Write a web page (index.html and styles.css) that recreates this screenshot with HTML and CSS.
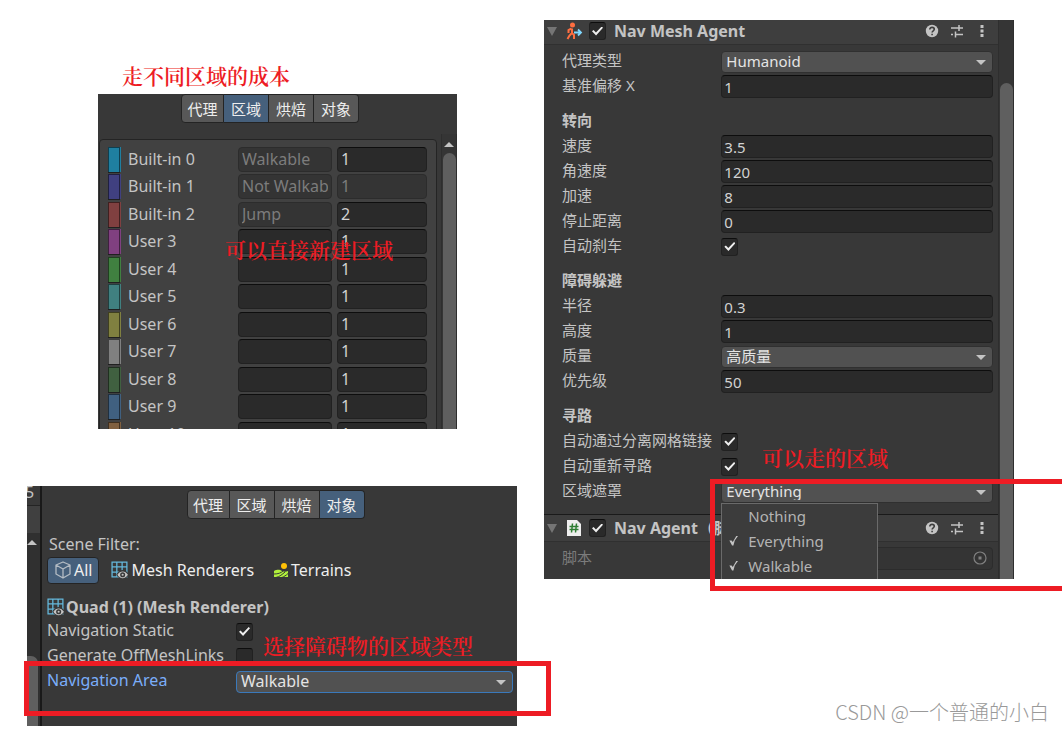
FILE: index.html
```
<!DOCTYPE html>
<html lang="zh-CN">
<head>
    <meta charset="UTF-8">
    <meta name="viewport" content="width=device-width, initial-scale=1.0">
    <title>导航网格设置</title>
    <link rel="stylesheet" href="styles.css">
</head>
<body>

    <!-- Общие иконки -->
    <svg class="sprite" aria-hidden="true">
        <symbol id="i-mesh" viewBox="0 0 17 17">
            <path d="M1 1h14v14H1zM1 5.500h14M1 10.500h14M5.500 1v14M10.500 1v14" fill="none" stroke="#64b8dc" stroke-width="1.200"/>
            <path d="M5 13c1.500-3 3.500-4.500 6-4.500s4.500 1.500 6 4.500c-1.500 2.500-3.500 4-6 4s-4.500-1.500-6-4z" fill="#383838"/>
            <path d="M6 13c1.300-2.200 3-3.200 5-3.200s3.700 1 5 3.200c-1.300 2.100-3 3.200-5 3.200S7.300 15.100 6 13z" fill="#c4c4c4"/>
            <circle cx="11" cy="13" r="2.400" fill="#383838"/>
            <circle cx="11" cy="13" r="1" fill="#c4c4c4"/>
        </symbol>
        <symbol id="i-help" viewBox="0 0 14 14">
            <circle cx="7" cy="7" r="6.200" fill="#c4c4c4"/>
            <path d="M4.800 5.500c0-3 4.500-2.700 4.500-.2 0 1.500-2.200 1.500-2.200 3.200M7.100 9.700v1.600" fill="none" stroke="#3e3e3e" stroke-width="1.600"/>
        </symbol>
        <symbol id="i-preset" viewBox="0 0 14 14">
            <path d="M1 4h8M9 1v6M9 4h4M1 10.500h2M5.500 7.500v6M5.500 10.500h7.500" fill="none" stroke="#c4c4c4" stroke-width="1.500"/>
        </symbol>
        <symbol id="i-more" viewBox="0 0 14 14">
            <path d="M5.500 1h3v3h-3zM5.500 5.500h3v3h-3zM5.500 10h3v3h-3z" fill="#c4c4c4"/>
        </symbol>
    </svg>

    <main>
        <div class="column">
            <!-- Стоимость областей -->
            <section class="shot shot-areas">
                <p class="note note-title">走不同区域的成本</p>
                <div class="panel areas">
                    <nav class="tabs">
                        <button type="button">代理</button>
                        <button type="button" class="active">区域</button>
                        <button type="button">烘焙</button>
                        <button type="button">对象</button>
                    </nav>
                    <div class="scroll">
                        <ul class="area-list">
                            <li><i class="swatch c0"></i><label for="a0">Built-in 0</label><input id="a0" value="Walkable" disabled><input class="cost" aria-label="Cost 0" value="1"></li>
                            <li><i class="swatch c1"></i><label for="a1">Built-in 1</label><input id="a1" value="Not Walkable" disabled><input class="cost" aria-label="Cost 1" value="1" disabled></li>
                            <li><i class="swatch c2"></i><label for="a2">Built-in 2</label><input id="a2" value="Jump" disabled><input class="cost" aria-label="Cost 2" value="2"></li>
                            <li><i class="swatch c3"></i><label for="a3">User 3</label><input id="a3"><input class="cost" aria-label="Cost 3" value="1"></li>
                            <li><i class="swatch c4"></i><label for="a4">User 4</label><input id="a4"><input class="cost" aria-label="Cost 4" value="1"></li>
                            <li><i class="swatch c5"></i><label for="a5">User 5</label><input id="a5"><input class="cost" aria-label="Cost 5" value="1"></li>
                            <li><i class="swatch c6"></i><label for="a6">User 6</label><input id="a6"><input class="cost" aria-label="Cost 6" value="1"></li>
                            <li><i class="swatch c7"></i><label for="a7">User 7</label><input id="a7"><input class="cost" aria-label="Cost 7" value="1"></li>
                            <li><i class="swatch c8"></i><label for="a8">User 8</label><input id="a8"><input class="cost" aria-label="Cost 8" value="1"></li>
                            <li><i class="swatch c9"></i><label for="a9">User 9</label><input id="a9"><input class="cost" aria-label="Cost 9" value="1"></li>
                            <li><i class="swatch c10"></i><label for="a10">User 10</label><input id="a10"><input class="cost" aria-label="Cost 10" value="1"></li>
                        </ul>
                        <div class="bar"><span class="up"></span><span class="thumb"></span></div>
                    </div>
                </div>
                <p class="note note-new">可以直接新建区域</p>
            </section>

            <!-- Область препятствия -->
            <section class="shot">
                <div class="panel objects">
                    <div class="side">
                        <span class="side-num">5</span>
                        <span class="side-head"></span>
                        <div class="side-bar"><span class="up"></span><span class="thumb"></span></div>
                    </div>
                    <div class="objects-body">
                        <nav class="tabs">
                            <button type="button">代理</button>
                            <button type="button">区域</button>
                            <button type="button">烘焙</button>
                            <button type="button" class="active">对象</button>
                        </nav>
                        <p class="filter-title">Scene Filter:</p>
                        <div class="filters">
                            <button type="button" class="active">
                                <svg width="18" height="18" viewBox="0 0 18 18"><path d="M9 1l7 3v9l-7 4-7-4V4zM2 4l7 4 7-4M9 8v9" fill="none" stroke="#b4bcc4" stroke-width="1.300" stroke-linejoin="round"/></svg>All
                            </button>
                            <button type="button"><svg width="18" height="18"><use href="#i-mesh"/></svg>Mesh Renderers</button>
                            <button type="button">
                                <svg width="16" height="16" viewBox="0 0 16 16"><circle cx="11" cy="4" r="3" fill="#ffc107"/><path d="M1 9c4-2 6-1 8 0s4 1 6 0v6H1z" fill="#b0f03c"/><path d="M1 12c4 0 7-1 9-3M3 15.500c4-1 6-3 9-5.500M9 15.500c2-1 4-2 6-4" fill="none" stroke="#383838" stroke-width="1"/></svg>Terrains
                            </button>
                        </div>
                        <h2 class="object-name"><svg width="18" height="18"><use href="#i-mesh"/></svg>Quad (1) (Mesh Renderer)</h2>
                        <div class="row"><label for="static">Navigation Static</label><input type="checkbox" id="static" checked></div>
                        <div class="row"><label for="links">Generate OffMeshLinks</label><input type="checkbox" id="links"></div>
                        <div class="row current">
                            <label for="area">Navigation Area</label>
                            <div class="dropdown"><select id="area"><option>Walkable</option></select></div>
                        </div>
                    </div>
                </div>
                <p class="note note-obstacle">选择障碍物的区域类型</p>
                <div class="frame frame-area"></div>
            </section>
        </div>

        <!-- Инспектор агента -->
        <section class="shot shot-agent">
            <div class="panel agent">
                <div class="inspector">
                    <header>
                        <span class="fold"></span>
                        <svg width="18" height="18" viewBox="0 0 18 18"><circle cx="6.500" cy="3" r="2.500" fill="#ff6e40"/><path d="M5.500 6.500L2.500 8v3M6 6.500v4.500l-2.500 2.500L1.500 17M6 11l2 2v4" fill="none" stroke="#ff6e40" stroke-width="2"/><path d="M8 10.500h6M12 7.500l3 3-3 3" fill="none" stroke="#80d8ff" stroke-width="1.800"/></svg>
                        <input type="checkbox" aria-label="Nav Mesh Agent" checked>
                        <h2>Nav Mesh Agent</h2>
                        <div class="tools">
                            <svg width="14" height="14"><use href="#i-help"/></svg>
                            <svg width="14" height="14"><use href="#i-preset"/></svg>
                            <svg width="14" height="14"><use href="#i-more"/></svg>
                        </div>
                    </header>
                    <div class="props">
                        <div class="row"><label for="type">代理类型</label><div class="dropdown"><select id="type"><option>Humanoid</option></select></div></div>
                        <div class="row"><label for="offset">基准偏移 X</label><input id="offset" value="1"></div>
                        <h3>转向</h3>
                        <div class="row"><label for="speed">速度</label><input id="speed" value="3.5"></div>
                        <div class="row"><label for="angular">角速度</label><input id="angular" value="120"></div>
                        <div class="row"><label for="accel">加速</label><input id="accel" value="8"></div>
                        <div class="row"><label for="stop">停止距离</label><input id="stop" value="0"></div>
                        <div class="row"><label for="brake">自动刹车</label><input type="checkbox" id="brake" checked></div>
                        <h3>障碍躲避</h3>
                        <div class="row"><label for="radius">半径</label><input id="radius" value="0.3"></div>
                        <div class="row"><label for="height">高度</label><input id="height" value="1"></div>
                        <div class="row"><label for="quality">质量</label><div class="dropdown"><select id="quality"><option>高质量</option></select></div></div>
                        <div class="row"><label for="priority">优先级</label><input id="priority" value="50"></div>
                        <h3>寻路</h3>
                        <div class="row"><label for="link">自动通过分离网格链接</label><input type="checkbox" id="link" checked></div>
                        <div class="row"><label for="repath">自动重新寻路</label><input type="checkbox" id="repath" checked></div>
                        <div class="row">
                            <label for="mask">区域遮罩</label>
                            <div class="dropdown">
                                <select id="mask"><option>Everything</option></select>
                                <ul class="menu">
                                    <li>Nothing</li>
                                    <li class="on">Everything</li>
                                    <li class="on">Walkable</li>
                                </ul>
                            </div>
                        </div>
                    </div>
                    <header class="second">
                        <span class="fold"></span>
                        <svg width="18" height="18" viewBox="0 0 18 18"><path d="M1 1h10l4 4v12H1z" fill="#eee"/><path d="M6.500 4.500l-1 9M10.500 4.500l-1 9M3.500 7.500h9M3.500 10.500h9" fill="none" stroke="#2e7d32" stroke-width="1.500"/></svg>
                        <input type="checkbox" aria-label="Nav Agent" checked>
                        <h2>Nav Agent（脚本）</h2>
                        <div class="tools">
                            <svg width="14" height="14"><use href="#i-help"/></svg>
                            <svg width="14" height="14"><use href="#i-preset"/></svg>
                            <svg width="14" height="14"><use href="#i-more"/></svg>
                        </div>
                    </header>
                    <div class="props script">
                        <div class="row">
                            <label for="script">脚本</label>
                            <div class="picker">
                                <input id="script" disabled>
                                <svg width="14" height="14" viewBox="0 0 14 14"><circle cx="7" cy="7" r="6" fill="none" stroke="#808080" stroke-width="1.200"/><path d="M5.500 5.500h3v3h-3z" fill="#808080"/></svg>
                            </div>
                        </div>
                    </div>
                </div>
                <div class="bar"><span class="thumb"></span></div>
            </div>
            <p class="note note-walk">可以走的区域</p>
        </section>
        <div class="frame frame-mask"></div>
    </main>

    <p class="watermark">CSDN @一个普通的小白</p>

</body>
</html>
```
FILE: styles.css
```
/* Основные стили */
* {
    box-sizing: border-box;
}

body {
    position: relative;
    margin: 0;
    min-height: 100vh;
    background-color: #fff;
    color: #c4c4c4;
    font-family: "Noto Sans", "Noto Sans CJK SC", sans-serif;
    font-size: 15px;
    line-height: 24px;
}

h2, h3, p, ul {
    margin: 0;
    padding: 0;
    list-style: none;
}

h2 {
    font-size: 16px;
}

h3 {
    font-size: 15px;
}

.sprite {
    position: absolute;
    width: 0;
    height: 0;
}

main {
    position: relative;
    display: grid;
    grid-template-columns: minmax(0, 490fr) minmax(0, 470fr);
    gap: 27px;
    align-items: start;
    padding: 20px 48px 0 27px;
}

.column {
    display: flex;
    flex-direction: column;
    gap: 57px;
    padding-top: 43px;
}

.shot {
    position: relative;
}

.shot-areas {
    margin: 0 60px 0 71px;
}

.panel {
    overflow: hidden;
    background-color: #383838;
}

/* Поля ввода */
input, select, button {
    margin: 0;
    font: inherit;
    color: inherit;
}

input {
    min-width: 0;
    height: 23px;
    padding: 0 2px;
    border: 1px solid #212121;
    border-top-color: #0d0d0d;
    border-radius: 4px;
    background-color: #2a2a2a;
    color: #d2d2d2;
}

input:disabled {
    border-color: #2c2c2c;
    background-color: #343434;
    color: #7c7c7c;
}

input[type="checkbox"] {
    appearance: none;
    flex: none;
    display: grid;
    place-items: center;
    width: 17px;
    height: 18px;
    padding: 0;
    border-radius: 3px;
}

input[type="checkbox"]:checked::before {
    content: "";
    width: 11px;
    height: 9px;
    background-color: #eee;
    clip-path: polygon(0 52%, 14% 38%, 36% 66%, 88% 0, 100% 14%, 37% 100%);
}

.dropdown {
    position: relative;
    display: flex;
}

.dropdown select {
    appearance: none;
    width: 100%;
    height: 22px;
    padding: 0 24px 2px 4px;
    border: 1px solid #303030;
    border-radius: 4px;
    background-color: #515151;
    color: #e4e4e4;
    line-height: 18px;
}

.dropdown::after {
    content: "";
    position: absolute;
    top: 9px;
    right: 7px;
    border: 5px solid transparent;
    border-top-color: #c4c4c4;
    border-bottom-width: 0;
}

/* Вкладки */
.tabs {
    display: flex;
    justify-content: center;
}

.tabs button {
    width: 45px;
    height: 29px;
    padding: 0;
    border: 1px solid #242424;
    border-left-width: 0;
    background-color: #585858;
    color: #eee;
    font-size: 15px;
}

.tabs button:first-child {
    width: 43px;
    border-left-width: 1px;
    border-radius: 4px 0 0 4px;
}

.tabs button:last-child {
    border-radius: 0 4px 4px 0;
}

.tabs button.active {
    background-color: #46607c;
}

/* Прокрутка */
.bar {
    display: flex;
    flex-direction: column;
    align-items: center;
    width: 16px;
    border: solid #2e2e2e;
    border-width: 0 1px;
    background-color: #353535;
}

.up {
    flex: none;
    border: 5px solid transparent;
    border-top-width: 0;
    border-bottom-color: #c4c4c4;
}

.thumb {
    flex: 1;
    width: 13px;
    border-radius: 7px 7px 0 0;
    background-color: #5f5f5f;
}

/* Список областей */
.areas {
    height: 335px;
    font-size: 16px;
}

.areas .tabs {
    padding-right: 15px;
}

.scroll {
    display: flex;
    justify-content: space-between;
    height: 306px;
    margin-top: 11px;
}

.scroll .up {
    margin: 8px 0 6px;
}

.area-list {
    flex: 1;
    display: grid;
    grid-auto-rows: 27px 28px;
    margin: 5px 4px 0 1px;
    padding: 7px 9px 0 8px;
    border: 1px solid #242424;
    border-radius: 4px;
    background-color: #414141;
}

.area-list li {
    display: grid;
    grid-template-columns: 13px minmax(0, 117fr) minmax(0, 94fr) minmax(0, 95fr);
    align-items: start;
}

.area-list label {
    padding-left: 7px;
}

.area-list input {
    height: 25px;
    padding: 0 3px 2px;
}

.area-list .cost {
    margin-left: 5px;
}

.swatch {
    height: 25px;
    padding-right: 1px;
}

.swatch::before {
    content: "";
    display: block;
    height: 24px;
    border: 1px solid #00000080;
}

.c0 { background-color: #1f7fa0; }
.c1 { background-color: #404080; }
.c2 { background-color: #804040; }
.c3 { background-color: #804080; }
.c4 { background-color: #408040; }
.c5 { background-color: #408080; }
.c6 { background-color: #808040; }
.c7 { background-color: #808080; }
.c8 { background-color: #406040; }
.c9 { background-color: #406080; }
.c10 { background-color: #806040; }

/* Вкладка объектов */
.objects {
    display: flex;
    height: 240px;
    font-size: 16px;
}

.side {
    flex: none;
    display: flex;
    flex-direction: column;
    width: 15px;
    border-right: 2px solid #191919;
}

.side-num {
    height: 20px;
    border-bottom: 1px solid #242424;
    line-height: 12px;
    text-indent: -2px;
}

.side-head {
    height: 27px;
    background-color: #404040;
}

.side-bar {
    flex: 1;
    display: flex;
    flex-direction: column;
    background-color: #303030;
}

.side-bar .up {
    align-self: flex-start;
    margin: 7px 0 111px;
}

.side-bar .thumb {
    width: 11px;
    border-radius: 0 7px 0 0;
}

.objects-body {
    flex: 1;
    padding: 4px 4px 0 5px;
}

.objects .tabs {
    padding-right: 9px;
}

.filter-title {
    margin-top: 13px;
    padding-left: 2px;
}

.filters {
    display: flex;
    gap: 5px;
    margin-top: 1px;
}

.filters button {
    display: flex;
    align-items: center;
    gap: 2px;
    height: 27px;
    padding: 0 7px 1px;
    border: 0;
    border-radius: 4px;
    background: none;
    color: #eee;
}

.filters .active {
    border: 1px solid #242424;
    padding: 0 6px 1px;
    background-color: #46607c;
}

.object-name {
    display: flex;
    align-items: center;
    gap: 1px;
    height: 25px;
    margin-top: 10px;
}

.row {
    display: grid;
    grid-template-columns: minmax(0, 159fr) minmax(0, 271fr);
    align-items: center;
    height: 25px;
}

.row label {
    padding-bottom: 3px;
    line-height: 22px;
    white-space: nowrap;
}

.objects .row {
    grid-template-columns: minmax(0, 189fr) minmax(0, 277fr);
}

.current label {
    color: #7baefa;
}

.current .dropdown select {
    border-color: #3a79bb;
}

/* Инспектор */
.agent {
    display: flex;
    height: 559px;
}

.inspector {
    flex: 1;
    min-width: 0;
}

.inspector header {
    display: flex;
    align-items: center;
    height: 25px;
    padding: 0 9px 2px 3px;
    border-bottom: 1px solid #303030;
    background-color: #3e3e3e;
}

.inspector header.second {
    height: 28px;
    border-top: 1px solid #1a1a1a;
    padding-bottom: 0;
}

.fold {
    border: 5px solid transparent;
    border-top: 9px solid #757575;
    border-bottom-width: 0;
}

header svg {
    margin-left: 9px;
}

header input[type="checkbox"] {
    margin: 0 8px 0 5px;
}

header h2 {
    white-space: nowrap;
}

.tools {
    display: flex;
    gap: 11px;
    margin-left: auto;
}

.tools svg {
    margin: 0;
}

.props {
    padding: 4px 5px 10px 18px;
}

.props h3 {
    height: 25px;
    margin-top: 10px;
    line-height: 22px;
}

.agent .bar {
    padding-top: 63px;
}

.menu {
    position: absolute;
    top: 22px;
    left: 0;
    z-index: 1;
    width: 157px;
    border: 1px solid #6a6a6a;
    background-color: #3c3c3c;
}

.menu li {
    position: relative;
    height: 25px;
    padding-left: 26px;
    line-height: 25px;
    color: #b4b4b4;
}

.menu .on::before {
    content: "";
    position: absolute;
    top: 7px;
    left: 7px;
    width: 9px;
    height: 10px;
    background-color: #c4c4c4;
    clip-path: polygon(0 50%, 25% 50%, 38% 66%, 80% 0, 100% 0, 60% 50%, 45% 100%, 30% 100%);
}

.script .row label {
    color: #7c7c7c;
}

.picker {
    position: relative;
    display: flex;
}

.picker input {
    width: 100%;
}

.picker svg {
    position: absolute;
    top: 4px;
    right: 6px;
}

/* Красные пометки поверх панелей */
.note {
    color: #ed1c24;
    font-family: "Noto Serif CJK SC", "Noto Sans CJK SC", serif;
    font-size: 21px;
    font-weight: 600;
    line-height: 24px;
    white-space: nowrap;
}

.note-title {
    padding: 0 0 7px 24px;
}

.note-new {
    position: absolute;
    top: 174px;
    left: 127px;
}

.note-obstacle {
    position: absolute;
    top: 147px;
    left: 236px;
}

.note-walk {
    position: absolute;
    top: 425px;
    left: 218px;
}

.frame {
    position: absolute;
    border: 5px solid #ed1c24;
    pointer-events: none;
}

.frame-area {
    top: 175px;
    right: -34px;
    left: -3px;
    height: 55px;
}

.frame-mask {
    top: 479px;
    right: 0;
    left: 710px;
    z-index: 2;
    height: 112px;
    border-right: 0;
}

.watermark {
    position: absolute;
    right: 13px;
    bottom: 7px;
    color: #999;
    font-family: "Noto Sans CJK SC", sans-serif;
    font-size: 20px;
    font-weight: 300;
}
```
